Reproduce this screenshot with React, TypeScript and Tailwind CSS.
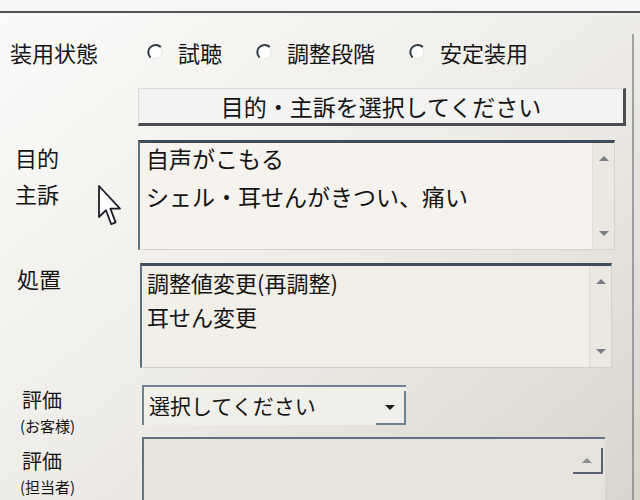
import React from 'react'

const font = { fontFamily: '"Noto Sans CJK JP", "Noto Sans", sans-serif' }

function Radio({ label }: { label: string }) {
  return (
    <label className="flex items-center">
      <svg width="18" height="18" viewBox="0 0 18 18" className="mr-[14px]">
        <circle cx="9" cy="9" r="7" fill="#ffffff" stroke="#e4e4e4" strokeWidth="1" />
        <path d="M4.5 14.5 A7 7 0 0 1 14.8 4" fill="none" stroke="#2f3a44" strokeWidth="2" />
      </svg>
      <span>{label}</span>
    </label>
  )
}

function ScrollCol({ down = true }: { down?: boolean }) {
  return (
    <div className="w-[22px] flex flex-col items-center justify-between py-[12px] bg-[#ebe8e2] border-l border-[#e0ddd6]">
      <svg width="12" height="7" viewBox="0 0 12 7">
        <path d="M1 6 L6 1 L11 6 Z" fill="#7b7f85" />
      </svg>
      {down && (
        <svg width="12" height="7" viewBox="0 0 12 7">
          <path d="M1 1 L6 6 L11 1 Z" fill="#7b7f85" />
        </svg>
      )}
    </div>
  )
}

function Cursor() {
  return (
    <svg
      width="24"
      height="42"
      viewBox="0 0 12 21"
      className="absolute left-[98px] top-[185px]"
    >
      <path
        d="M0.5 0.5 L0.5 16 L4 12.6 L6.6 19.6 L8.8 18.7 L6.2 11.8 L11 11.8 Z"
        fill="#ffffff"
        stroke="#1b1f2a"
        strokeWidth="0.9"
        strokeLinejoin="round"
      />
    </svg>
  )
}

export default function App() {
  return (
    <div
      className="relative w-[640px] h-[500px] overflow-hidden bg-gradient-to-br from-[#fbfbfa] via-[#efede8] to-[#d9d5cd] text-[#141414] text-[22px]"
      style={font}
    >
      <div className="h-[11px] bg-[#f6f6f6]" />
      <div className="h-[2px] bg-[#505357]" />

      <div className="mr-[6px] h-[487px] border-r-2 border-[#6d6f73]/60">
        {/* 装用状態 */}
        <div className="flex items-center h-[36px] mt-[21px]">
          <div className="w-[146px] pl-[10px]">装用状態</div>
          <div className="flex items-center gap-[33px]">
            <Radio label="試聴" />
            <Radio label="調整段階" />
            <Radio label="安定装用" />
          </div>
        </div>

        {/* 選択ボタン */}
        <div className="mt-[18px] ml-[138px] w-[488px] h-[38px] flex items-center justify-center bg-[#f3f3f2] border-t border-l border-[#dcdcdc] border-r-[3px] border-b-[3px] border-r-[#4a4d52] border-b-[#4a4d52] text-[23px]">
          目的・主訴を選択してください
        </div>

        {/* 目的・主訴 */}
        <div className="flex mt-[14px]">
          <div className="w-[138px] pl-[15px] leading-[36px] -mt-[1px]">
            <div>目的</div>
            <div>主訴</div>
          </div>
          <div className="w-[477px] h-[110px] flex bg-[#f6f3ee] border-t-[3px] border-l-2 border-t-[#3d4d5c] border-l-[#5d7080] border-r border-b border-[#d6d3cc]">
            <div className="flex-1 pl-[6px] leading-[38px] -mt-[4px] text-[23px]">
              <div>自声がこもる</div>
              <div>シェル・耳せんがきつい、痛い</div>
            </div>
            <ScrollCol />
          </div>
        </div>

        {/* 処置 */}
        <div className="flex mt-[13px]">
          <div className="w-[140px] pl-[17px] leading-[30px]">処置</div>
          <div className="w-[472px] h-[105px] flex bg-[#f2efe9] border-t-[3px] border-l-2 border-t-[#3d4d5c] border-l-[#5d7080] border-r border-b border-[#d3d0c9]">
            <div className="flex-1 pl-[5px] leading-[34px] -mt-[1px]">
              <div>調整値変更(再調整)</div>
              <div>耳せん変更</div>
            </div>
            <ScrollCol />
          </div>
        </div>

        {/* 評価(お客様) */}
        <div className="flex mt-[17px] h-[40px]">
          <div className="w-[142px] pl-[22px]">
            <div className="leading-[30px] text-[20px]">評価</div>
            <div className="leading-[22px] text-[15px] -ml-[2px]">(お客様)</div>
          </div>
          <div className="w-[264px] h-[40px] flex items-center bg-[#f1efea] border-t-2 border-l-2 border-[#6d8294]">
            <span className="flex-1 pl-[5px] text-[21px]">選択してください</span>
            <div className="w-[30px] h-[34px] mt-[4px] flex items-center justify-center border-r-2 border-b-2 border-[#6d8294]">
              <svg width="12" height="7" viewBox="0 0 12 7">
                <path d="M1 1 L6 6 L11 1 Z" fill="#1b1b1b" />
              </svg>
            </div>
          </div>
        </div>

        {/* 評価(担当者) */}
        <div className="flex mt-[12px]">
          <div className="w-[142px] pl-[22px] pt-[9px]">
            <div className="leading-[30px] text-[20px]">評価</div>
            <div className="leading-[22px] text-[15px] -ml-[2px]">(担当者)</div>
          </div>
          <div className="w-[463px] h-[70px] flex justify-end bg-[#e6e3dc] border-t-2 border-l-2 border-[#5f7384]">
            <div className="w-[30px] h-[26px] mt-[9px] mr-[2px] flex items-center justify-center border-r-2 border-b-2 border-[#5a6470]">
              <svg width="12" height="7" viewBox="0 0 12 7">
                <path d="M1 6 L6 1 L11 6 Z" fill="#8a8d92" />
              </svg>
            </div>
          </div>
        </div>
      </div>

      <Cursor />
    </div>
  )
}
